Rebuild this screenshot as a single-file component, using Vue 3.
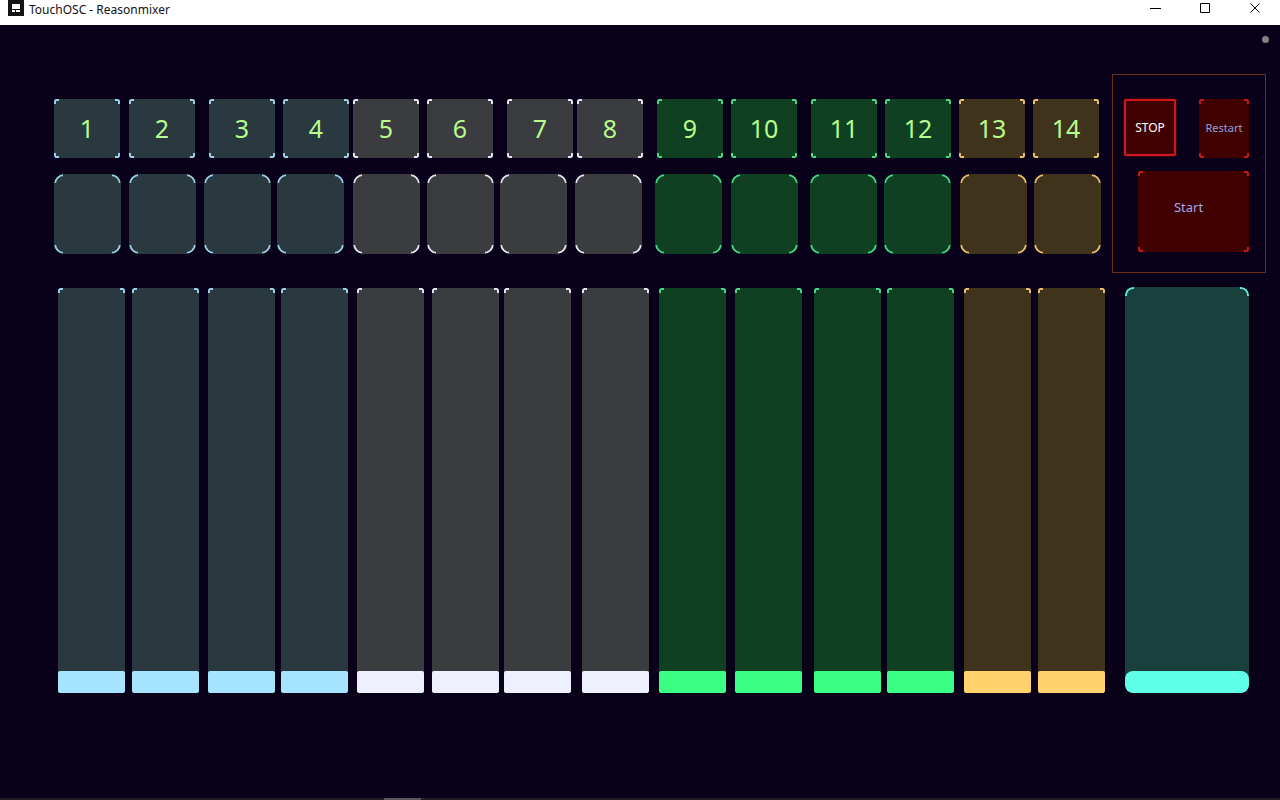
<script setup>
import { ref } from 'vue'

const groups = ['sky', 'sky', 'sky', 'sky', 'ash', 'ash', 'ash', 'ash', 'leaf', 'leaf', 'leaf', 'leaf', 'amber', 'amber']

const rows = {
  select: { width: 66, starts: [54, 129, 209, 283, 353, 427, 507, 577, 657, 731, 811, 885, 959, 1033] },
  mute: { width: 67, starts: [54, 129, 204, 277, 353, 427, 500, 575, 655, 731, 810, 884, 960, 1034] },
  level: { width: 67, starts: [58, 132, 208, 281, 357, 432, 504, 582, 659, 735, 814, 887, 964, 1038] }
}
const rowSpan = 1112

// Turns the start of each control into proportional grid tracks: space, control, space, control, ...
function tracks({ width, starts }) {
  const list = []
  let cursor = 0
  for (const start of starts) {
    list.push(start - cursor, width)
    cursor = start + width
  }
  list.push(rowSpan - cursor)
  return { gridTemplateColumns: list.map((n) => `minmax(0, ${n}fr)`).join(' ') }
}

const levels = ref(groups.map(() => 0))
const master = ref(0)
</script>

<template>
  <div class="window">
    <header class="titlebar">
      <svg class="logo" viewBox="0 0 16 16" aria-hidden="true">
        <rect width="16" height="16" fill="#141414" />
        <rect x="4" y="4" width="8" height="5" fill="#fff" />
        <rect x="4" y="10" width="3" height="2" fill="#fff" />
        <rect x="8" y="10" width="4" height="2" fill="#fff" />
      </svg>
      <h1>TouchOSC - Reasonmixer</h1>
      <div class="controls">
        <button type="button" aria-label="Minimize">
          <svg viewBox="0 0 11 11"><path d="M0 5.5h11" /></svg>
        </button>
        <button type="button" aria-label="Maximize">
          <svg viewBox="0 0 11 11"><path d="M.5.5h9v9H.5z" /></svg>
        </button>
        <button type="button" aria-label="Close">
          <svg viewBox="0 0 11 11"><path d="M.5.5l9 9M9.5.5l-9 9" /></svg>
        </button>
      </div>
    </header>

    <main class="surface">
      <span class="status"></span>

      <section class="mixer">
        <div class="row selects" :style="tracks(rows.select)">
          <button v-for="(g, i) in groups" :key="i" type="button" class="plate pad" :class="g">{{ i + 1 }}</button>
        </div>
        <div class="row mutes" :style="tracks(rows.mute)">
          <button
            v-for="(g, i) in groups" :key="i" type="button" class="plate round" :class="g"
            :aria-label="`Mute ${i + 1}`"
          ></button>
        </div>
        <div class="row levels" :style="tracks(rows.level)">
          <label v-for="(g, i) in groups" :key="i" class="plate fader" :class="g">
            <input v-model="levels[i]" type="range" min="0" max="127" :aria-label="`Level ${i + 1}`" />
          </label>
        </div>
      </section>

      <section class="side">
        <div class="transport">
          <div class="pair">
            <button type="button" class="plate red stop">STOP</button>
            <button type="button" class="plate red restart">Restart</button>
          </div>
          <button type="button" class="plate red start">Start</button>
        </div>
        <label class="plate round fader teal master">
          <input v-model="master" type="range" min="0" max="127" aria-label="Master level" />
        </label>
      </section>
    </main>

    <footer class="edge"><span></span></footer>
  </div>
</template>

<style>
body {
  margin: 0;
  background: #09001a;
}
</style>

<style scoped>
.window {
  display: flex;
  flex-direction: column;
  min-height: 100vh;
  background: #09001a;
  font-family: "Noto Sans", "Open Sans", sans-serif;
}

button {
  font-family: inherit;
  padding: 0;
  border: 0;
  cursor: pointer;
}

.titlebar {
  display: flex;
  align-items: flex-start;
  height: 25px;
  padding-left: 8px;
  background: #fff;
}

.logo {
  width: 16px;
  height: 16px;
}

h1 {
  margin: 0 0 0 5px;
  font-size: 12px;
  line-height: 20px;
  font-weight: 400;
  color: #111;
}

.controls {
  display: flex;
  margin-left: auto;
}

.controls button {
  display: flex;
  justify-content: center;
  align-items: center;
  width: 50px;
  height: 17px;
  background: none;
}

.controls svg {
  width: 11px;
  height: 11px;
  fill: none;
  stroke: #000;
}

.surface {
  position: relative;
  flex: 1;
  display: grid;
  grid-template-columns: minmax(0, 1112fr) minmax(0, 168fr);
  padding: 49px 0 105px;
}

.status {
  position: absolute;
  top: 11px;
  right: 11px;
  width: 7px;
  height: 7px;
  border-radius: 50%;
  background: #858088;
}

.mixer {
  display: flex;
  flex-direction: column;
  padding-top: 25px;
}

.row {
  display: grid;
}

.row > :nth-child(1) { grid-column: 2; }
.row > :nth-child(2) { grid-column: 4; }
.row > :nth-child(3) { grid-column: 6; }
.row > :nth-child(4) { grid-column: 8; }
.row > :nth-child(5) { grid-column: 10; }
.row > :nth-child(6) { grid-column: 12; }
.row > :nth-child(7) { grid-column: 14; }
.row > :nth-child(8) { grid-column: 16; }
.row > :nth-child(9) { grid-column: 18; }
.row > :nth-child(10) { grid-column: 20; }
.row > :nth-child(11) { grid-column: 22; }
.row > :nth-child(12) { grid-column: 24; }
.row > :nth-child(13) { grid-column: 26; }
.row > :nth-child(14) { grid-column: 28; }

.selects {
  grid-template-rows: 59px;
}

.mutes {
  grid-template-rows: 80px;
  margin-top: 16px;
}

.levels {
  flex: 1;
  margin-top: 34px;
}

.sky { --fill: #29393f; --mark: #9bcfe8; --bar: #a5e3ff; }
.ash { --fill: #3b3c3f; --mark: #e2e2f2; --bar: #eef0ff; }
.leaf { --fill: #0f4021; --mark: #45d887; --bar: #3bff85; }
.amber { --fill: #3f331b; --mark: #e8bf72; --bar: #ffd26e; }
.teal { --fill: #19403c; --mark: #5fe8d4; --bar: #60ffe8; }
.red { --fill: #400000; --mark: #c8191c; }

.plate {
  --corner: 5px;
  --radius: 2px;
  position: relative;
  box-sizing: border-box;
  background: var(--fill);
  border-radius: var(--radius);
}

.round {
  --corner: 9px;
  --radius: 10px;
}

/* Only the four corners of the outline are shown. */
.plate::before {
  content: "";
  position: absolute;
  inset: 0;
  border: 2px solid var(--mark);
  border-radius: var(--radius);
  pointer-events: none;
  mask:
    linear-gradient(#000 0 0) 0 0 / var(--corner) var(--corner) no-repeat,
    linear-gradient(#000 0 0) 100% 0 / var(--corner) var(--corner) no-repeat,
    linear-gradient(#000 0 0) 0 100% / var(--corner) var(--corner) no-repeat,
    linear-gradient(#000 0 0) 100% 100% / var(--corner) var(--corner) no-repeat;
}

.pad {
  padding-bottom: 2px;
  font-size: 25px;
  line-height: 34px;
  color: #b8fb8c;
}

.fader {
  display: block;
  overflow: hidden;
  container-type: inline-size;
}

.fader input {
  position: absolute;
  inset: 0;
  width: 100%;
  height: 100%;
  margin: 0;
  appearance: none;
  background: none;
  writing-mode: vertical-lr;
  direction: rtl;
}

.fader input::-webkit-slider-runnable-track {
  width: 100cqw;
  height: 100%;
}

.fader input::-webkit-slider-thumb {
  appearance: none;
  width: 100cqw;
  height: 22px;
  border: 0;
  border-radius: var(--radius);
  background: var(--bar);
}

.side {
  display: flex;
  flex-direction: column;
}

.transport {
  display: flex;
  flex-direction: column;
  gap: 13px;
  margin-right: 14px;
  padding: 24px 16px 20px 11px;
  border: 1px solid #6a2f1a;
}

.pair {
  display: flex;
  justify-content: space-between;
  align-items: flex-start;
}

.red {
  font-size: 12px;
  line-height: 16px;
  color: #a3a8e6;
}

.stop {
  width: 52px;
  height: 57px;
  color: #fff;
  box-shadow: inset 0 0 0 2px #d0181b, 0 0 2px #a00d10;
}

.restart {
  width: 50px;
  height: 59px;
  padding-bottom: 2px;
  font-size: 11px;
  color: #8ba6dc;
}

.start {
  height: 81px;
  margin-left: 14px;
  padding: 0 10px 10px 0;
  font-size: 13px;
}

.master {
  --radius: 8px;
  flex: 1;
  margin: 14px 31px 0 13px;
}

.edge {
  display: grid;
  grid-template-columns: minmax(0, 37fr) minmax(0, 858fr);
  padding-left: 30%;
  height: 2px;
  background: #211b26;
}

.edge span {
  background: #5c5660;
}
</style>
